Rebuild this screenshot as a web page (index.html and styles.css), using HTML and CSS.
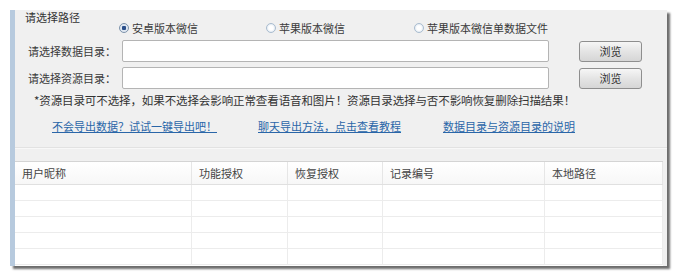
FILE: index.html
```html
<!DOCTYPE html>
<html lang="zh">
<head>
<meta charset="utf-8">
<link rel="stylesheet" href="styles.css">
</head>
<body>
<div class="window">
  <div class="panel">
    <div class="group-title">请选择路径</div>
    <div class="radios">
      <label class="radio checked"><span class="dot"></span>安卓版本微信</label>
      <label class="radio"><span class="dot"></span>苹果版本微信</label>
      <label class="radio"><span class="dot"></span>苹果版本微信单数据文件</label>
    </div>
    <div class="field">
      <span class="label">请选择数据目录：</span>
      <span class="input"></span>
      <span class="btn">浏览</span>
    </div>
    <div class="field">
      <span class="label">请选择资源目录：</span>
      <span class="input"></span>
      <span class="btn">浏览</span>
    </div>
    <div class="note">*资源目录可不选择，如果不选择会影响正常查看语音和图片！资源目录选择与否不影响恢复删除扫描结果！</div>
    <div class="links">
      <a class="link l1">不会导出数据？试试一键导出吧！</a>
      <a class="link l2">聊天导出方法，点击查看教程</a>
      <a class="link l3">数据目录与资源目录的说明</a>
    </div>
    <div class="sep"></div>
  </div>
  <div class="table">
    <div class="row head">
      <div class="cell">用户昵称</div>
      <div class="cell">功能授权</div>
      <div class="cell">恢复授权</div>
      <div class="cell">记录编号</div>
      <div class="cell">本地路径</div>
    </div>
    <div class="row"><div class="cell"></div><div class="cell"></div><div class="cell"></div><div class="cell"></div><div class="cell"></div></div>
    <div class="row"><div class="cell"></div><div class="cell"></div><div class="cell"></div><div class="cell"></div><div class="cell"></div></div>
    <div class="row"><div class="cell"></div><div class="cell"></div><div class="cell"></div><div class="cell"></div><div class="cell"></div></div>
    <div class="row"><div class="cell"></div><div class="cell"></div><div class="cell"></div><div class="cell"></div><div class="cell"></div></div>
    <div class="row"><div class="cell"></div><div class="cell"></div><div class="cell"></div><div class="cell"></div><div class="cell"></div></div>
  </div>
</div>
</body>
</html>
```
FILE: styles.css
```css
html, body {
  margin: 0;
  padding: 0;
  background: #ffffff;
}
body {
  font-family: "Noto Sans CJK SC", "Noto Sans", sans-serif;
  color: #3a3a3a;
  width: 676px;
  height: 280px;
  overflow: hidden;
}
.window {
  margin: 10px 0 0 10px;
  width: 652px;
  height: 256px;
  border-left: 5px solid #b7cade;
  background: #f0f0f0;
  box-shadow: 3px 3px 2px rgba(60, 60, 60, 0.75);
  display: flex;
  flex-direction: column;
  overflow: hidden;
}
.panel {
  height: 151px;
  display: flex;
  flex-direction: column;
  padding-left: 10px;
}
.group-title {
  font-size: 11px;
  line-height: 15px;
  height: 15px;
  color: #333;
}
.radios {
  display: flex;
  margin-top: -3px;
  padding-left: 94px;
  height: 12px;
  align-items: center;
  font-size: 11px;
  line-height: 12px;
}
.radio {
  display: flex;
  align-items: center;
  gap: 3px;
  color: #3a3a3a;
}
.radio:nth-child(1) { width: 147px; }
.radio:nth-child(2) { width: 148px; }
.dot {
  width: 8px;
  height: 8px;
  border-radius: 50%;
  border: 1px solid #a9bccf;
  background: radial-gradient(circle, #ffffff 0 2px, #e6edf4 4px);
  box-sizing: content-box;
}
.checked .dot {
  border-color: #7d93ab;
  background: radial-gradient(circle, #2b4f8a 0 2px, #dfe7f1 2.5px);
}
.field {
  display: flex;
  align-items: center;
  margin-top: 6px;
  height: 22px;
}
.field + .field {
  margin-top: 5px;
}
.label {
  width: 94px;
  padding-left: 3px;
  font-size: 11px;
  color: #3a3a3a;
}
.input {
  width: 425px;
  height: 20px;
  background: #ffffff;
  border: 1px solid #b4b4b4;
  border-radius: 2px;
}
.btn {
  margin-left: 30px;
  width: 61px;
  height: 19px;
  border: 1px solid #8e8e8e;
  border-radius: 3px;
  background: linear-gradient(#f6f6f6, #e4e4e4 50%, #d6d6d6);
  font-size: 11px;
  color: #333;
  display: flex;
  align-items: center;
  justify-content: center;
}
.note {
  margin-top: 4px;
  padding-left: 9px;
  font-size: 11.5px;
  line-height: 14px;
  color: #333;
  letter-spacing: -0.1px;
}
.links {
  display: flex;
  margin-top: 13px;
  padding-left: 27px;
  font-size: 11px;
  line-height: 13px;
}
.link {
  color: #2a66a8;
  text-decoration: underline;
}
.l1 { width: 206px; }
.l2 { width: 185px; }
.sep {
  margin-top: 14px;
  margin-left: -10px;
  height: 1px;
  background: #e2e2e2;
  border-bottom: 1px solid #f8f8f8;
}
.table {
  width: 648px;
  flex: 1;
  background: #ffffff;
  border-top: 1px solid #d4d4d4;
  display: flex;
  flex-direction: column;
}
.row {
  display: grid;
  grid-template-columns: 177px 96px 95px 162px 118px;
  height: 15px;
  border-bottom: 1px solid #ececec;
}
.row.head {
  height: 22px;
  border-bottom: 1px solid #e0e0e0;
  background: linear-gradient(#ffffff, #f7f7f7);
}
.cell {
  border-right: 1px solid #ececec;
}
.head .cell {
  font-size: 11px;
  line-height: 22px;
  padding-left: 7px;
  color: #444;
  border-right: 1px solid #e6e6e6;
}
```
